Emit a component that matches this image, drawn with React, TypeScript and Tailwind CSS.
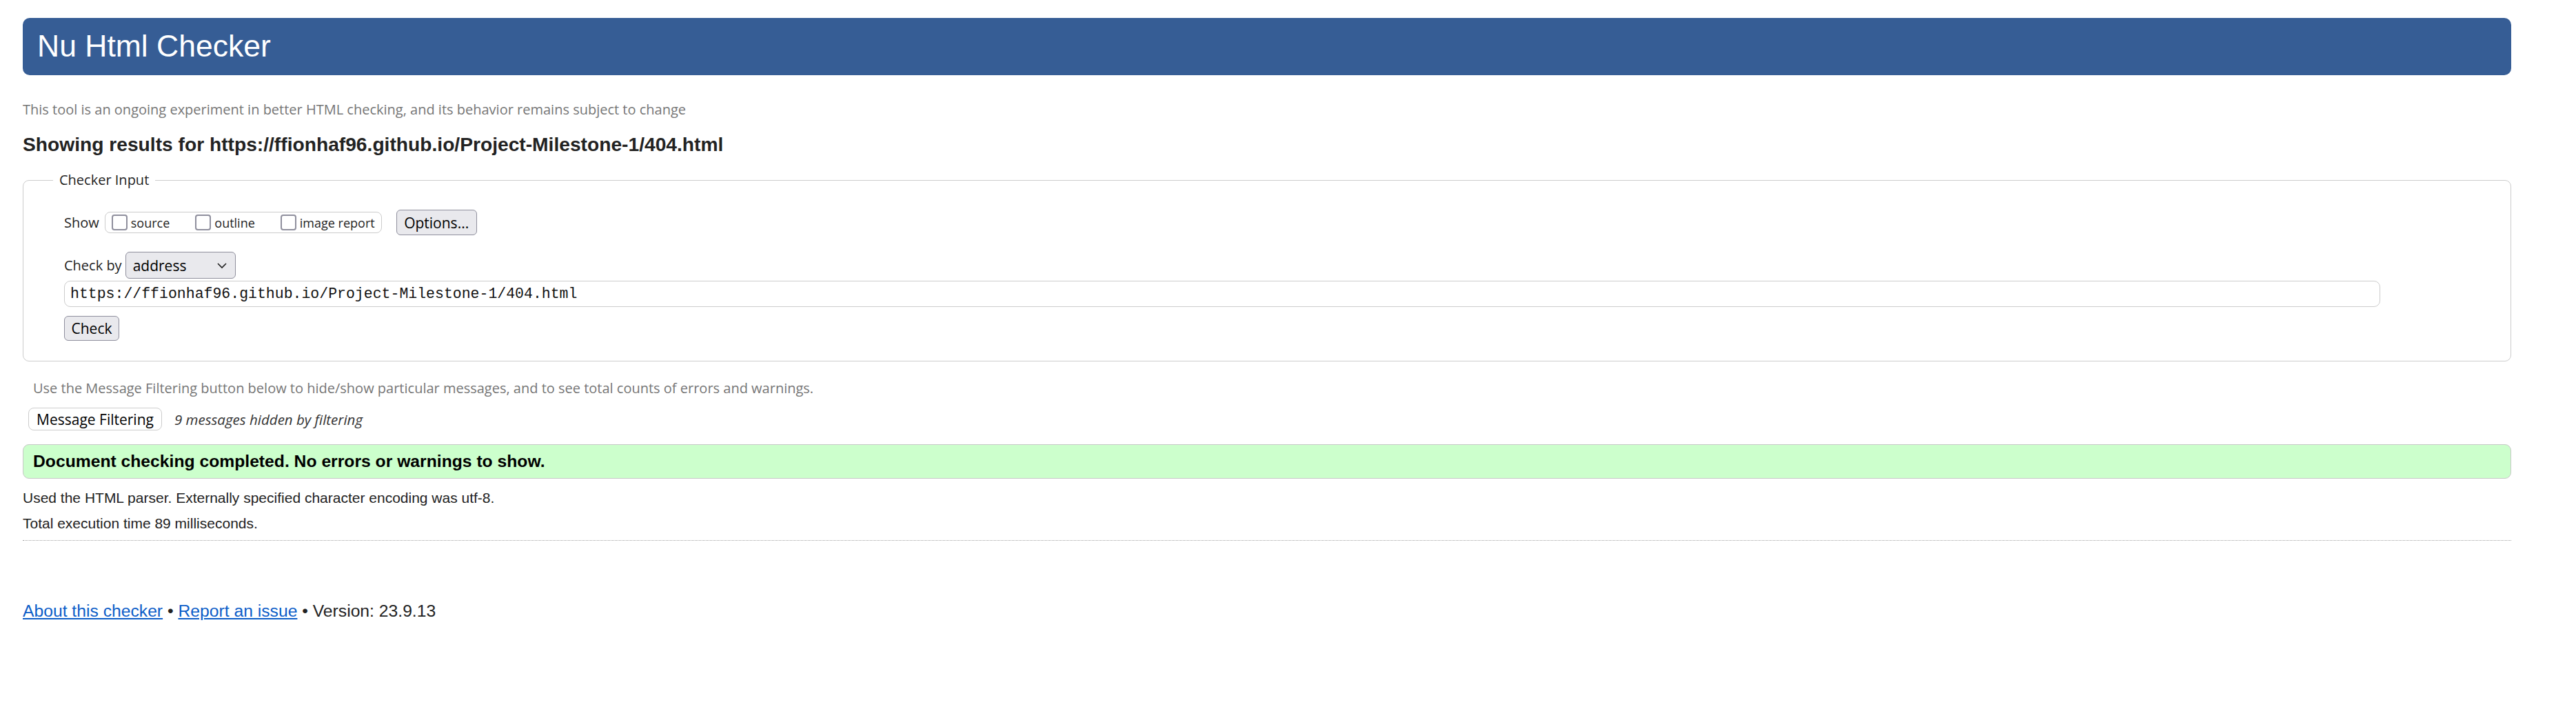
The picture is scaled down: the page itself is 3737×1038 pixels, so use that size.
import React from "react";

function ShowOption({ label }: { label: string }) {
  return (
    <label className="flex items-center gap-[5px]">
      <span className="h-[23px] w-[23px] rounded-[4px] border-2 border-[#8f8f9d] bg-white" />
      <span className="text-[18px] leading-[24px] text-[#1f1f1f]">{label}</span>
    </label>
  );
}

export default function App() {
  return (
    <div className="min-h-screen bg-white pl-[33px] pr-[94px] pt-[26px] font-['Open_Sans',sans-serif] text-[#1f1f1f]">
      {/* Title bar */}
      <header className="flex h-[83px] items-center rounded-[10px] bg-[#365d95] pl-[21px]">
        <h1 className="font-['Liberation_Sans',Arial,sans-serif] text-[44.5px] leading-none font-normal text-white">
          Nu Html Checker
        </h1>
      </header>

      <p className="mt-[38px] text-[20px] leading-[24px] text-[#767676]">
        This tool is an ongoing experiment in better HTML checking, and its behavior remains subject to change
      </p>

      <h2 className="mt-[22px] font-['Liberation_Sans',Arial,sans-serif] text-[28.2px] leading-[32px] font-bold text-[#222]">
        Showing results for https://ffionhaf96.github.io/Project-Milestone-1/404.html
      </h2>

      {/* Checker input */}
      <fieldset className="mt-[22px] rounded-[9px] border border-[#cccccc] pb-[29px] pl-[59px]">
        <legend className="ml-[-16px] px-[9px] text-[20px] leading-[28px] text-[#1f1f1f]">Checker Input</legend>

        <div className="mt-[29px] flex items-center">
          <span className="text-[20px] leading-[24px]">Show</span>
          <div className="ml-[8px] flex h-[31px] items-center gap-[37px] rounded-[8px] border border-[#cccccc] px-[9px]">
            <ShowOption label="source" />
            <ShowOption label="outline" />
            <ShowOption label="image report" />
          </div>
          <button className="ml-[21px] h-[37px] w-[117px] rounded-[6px] border border-[#8f8f9d] bg-[#e9e9ed] text-[21px] leading-[24px] text-black">
            Options...
          </button>
        </div>

        <div className="mt-[24px] flex items-center">
          <span className="text-[20px] leading-[24px]">Check by</span>
          <div className="ml-[5px] flex h-[39px] w-[160px] items-center justify-between rounded-[6px] border border-[#8f8f9d] bg-[#e9e9ed] pl-[10px] pr-[11px]">
            <span className="text-[21px] leading-[24px] text-black">address</span>
            <svg width="16" height="10" viewBox="0 0 16 10" fill="none">
              <polyline points="2,2 8,8 14,2" stroke="#1f1f1f" strokeWidth="1.6" />
            </svg>
          </div>
        </div>

        <div className="mt-[3px] flex h-[38px] w-[3360px] items-center rounded-[9px] border border-[#cccccc] bg-white pl-[8px] font-['Liberation_Mono',monospace] text-[21.5px] text-[#111]">
          https://ffionhaf96.github.io/Project-Milestone-1/404.html
        </div>

        <button className="mt-[13px] h-[36px] w-[80px] rounded-[6px] border border-[#8f8f9d] bg-[#e9e9ed] text-[21px] leading-[24px] text-black">
          Check
        </button>
      </fieldset>

      <p className="mt-[27px] pl-[15px] text-[20px] leading-[24px] text-[#767676]">
        Use the Message Filtering button below to hide/show particular messages, and to see total counts of errors and warnings.
      </p>

      <div className="mt-[16px] flex items-center">
        <button className="ml-[8px] h-[33px] w-[194px] rounded-[8px] border border-[#cccccc] bg-white text-[21px] leading-[24px] text-black">
          Message Filtering
        </button>
        <span className="ml-[18px] text-[20.5px] leading-[24px] italic text-[#333]">9 messages hidden by filtering</span>
      </div>

      {/* Result */}
      <div className="mt-[20px] flex h-[50px] items-center rounded-[9px] border border-[#c8c8c8] bg-[#ccffcc] pl-[14px]">
        <p className="font-['Liberation_Sans',Arial,sans-serif] text-[24.7px] leading-[28px] font-bold text-black">
          Document checking completed. No errors or warnings to show.
        </p>
      </div>

      <p className="mt-[16px] font-['Liberation_Sans',Arial,sans-serif] text-[21px] leading-[24px] text-[#222]">
        Used the HTML parser. Externally specified character encoding was utf-8.
      </p>
      <p className="mt-[13px] font-['Liberation_Sans',Arial,sans-serif] text-[21px] leading-[24px] text-[#222]">
        Total execution time 89 milliseconds.
      </p>

      <div className="mt-[12px] border-t border-dotted border-[#a0a0a0]" />

      <footer className="mt-[88px] font-['Liberation_Sans',Arial,sans-serif] text-[24.7px] leading-[28px] text-[#222]">
        <a href="#" className="text-[#0c5dc8] underline">About this checker</a> •{" "}
        <a href="#" className="text-[#0c5dc8] underline">Report an issue</a> • Version: 23.9.13
      </footer>
    </div>
  );
}
